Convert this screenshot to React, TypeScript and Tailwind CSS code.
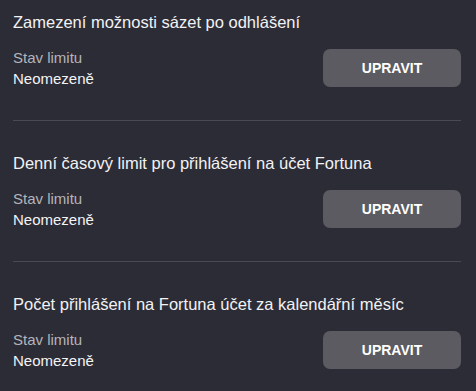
const limits = [
  "Zamezení možnosti sázet po odhlášení",
  "Denní časový limit pro přihlášení na účet Fortuna",
  "Počet přihlášení na Fortuna účet za kalendářní měsíc",
];

function LimitRow({ title, first }: { title: string; first: boolean }) {
  return (
    <section
      className={`${first ? "pt-[10px]" : "border-t border-[#4a4a54] pt-[30px]"} pb-[31px]`}
    >
      <h3 className="m-0 text-[16.5px] leading-6 font-normal text-[#f2f2f4]">{title}</h3>
      <div className="mt-[13px] flex items-center justify-between">
        <div className="text-[15px] leading-[21px]">
          <div className="text-[#b4b4ba]">Stav limitu</div>
          <div className="text-[#f4f4f6]">Neomezeně</div>
        </div>
        <button
          type="button"
          className="h-[38px] w-[138px] rounded-[7px] bg-[#5b5b61] text-sm font-bold uppercase text-white"
        >
          Upravit
        </button>
      </div>
    </section>
  );
}

export default function App() {
  return (
    <div
      className="min-h-[391px] w-[476px] bg-[#2c2c36] pl-[13px] pr-[15px]"
      style={{ fontFamily: '"Liberation Sans", Arial, sans-serif' }}
    >
      {limits.map((t, i) => (
        <LimitRow key={t} title={t} first={i === 0} />
      ))}
    </div>
  );
}
